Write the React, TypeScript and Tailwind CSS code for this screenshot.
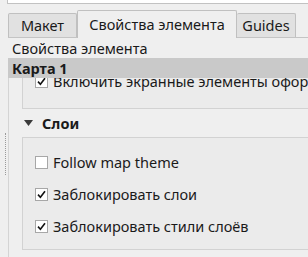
import * as React from 'react';

const Check = ({ checked }: { checked: boolean }) => (
	<div className="w-[13px] h-[13px] bg-white border border-[#a7a7a7] flex items-center justify-center shrink-0">
		{checked && (
			<svg width="9" height="9" viewBox="0 0 9 9">
				<path d="M1 4.6 L3.4 7.2 L8 1.2" fill="none" stroke="#111" strokeWidth="1.6" />
			</svg>
		)}
	</div>
);

const CheckRow = ({ label, checked }: { label: string; checked: boolean }) => (
	<div className="flex items-center h-[20px] pl-[12px] gap-[5px] whitespace-nowrap">
		<Check checked={checked} />
		<span>{label}</span>
	</div>
);

const App = () => {
	return (
		<div className="w-[308px] h-[257px] bg-[#efefef] overflow-hidden text-[14.5px] leading-none text-[#1a1a1a] font-['Noto_Sans','DejaVu_Sans',sans-serif]">
			<div className="ml-[7px] h-[4px] bg-white border border-t-0 border-r-0 border-[#c2c2c2]" />

			<div className="flex items-end h-[28px] mt-[6px] ml-[8px] border-b border-[#c4c4c4]">
				<div className="h-[24px] w-[69px] border border-b-0 border-[#c0c0c0] bg-[#e1e1e1] rounded-t-[2px] flex items-center justify-center">
					Макет
				</div>
				<div className="h-[28px] w-[160px] -mb-px border border-b-0 border-[#c0c0c0] bg-[#efefef] rounded-t-[2px] flex items-center justify-center">
					Свойства элемента
				</div>
				<div className="h-[24px] w-[59px] border border-b-0 border-l-0 border-[#c0c0c0] bg-[#e1e1e1] rounded-t-[2px] flex items-center justify-center">
					Guides
				</div>
			</div>

			<div className="h-[20px] pl-[12px] flex items-center">Свойства элемента</div>

			<div className="h-[20px] ml-[8px] bg-[#c9c9c9] pl-[4px] flex items-center font-bold">
				Карта 1
			</div>

			<div className="flex h-[179px]">
				<div className="w-[8px] shrink-0 flex justify-center pt-[55px] pl-[2px]">
					<div className="h-[42px] border-l border-dotted border-[#9a9a9a]" />
				</div>
				<div className="flex-1 border-l border-[#d4d4d4] overflow-hidden">
					<div className="ml-[13px] h-[31px] border-l border-b border-[#d2d2d2] bg-[#ebebeb] overflow-hidden">
						<div className="-mt-[7px]">
							<CheckRow label="Включить экранные элементы оформления" checked />
						</div>
					</div>

					<div className="h-[28px] flex items-center pl-[15px] gap-[9px] font-bold">
						<svg width="9" height="6" viewBox="0 0 9 6">
							<path d="M0 0 H9 L4.5 6 Z" fill="#3a3a3a" />
						</svg>
						<span>Слои</span>
					</div>

					<div className="ml-[13px] h-[113px] border-l border-t border-b border-[#d2d2d2] bg-[#ebebeb] flex flex-col pt-[14px] gap-[12px]">
						<CheckRow label="Follow map theme" checked={false} />
						<CheckRow label="Заблокировать слои" checked />
						<CheckRow label="Заблокировать стили слоёв" checked />
					</div>
				</div>
			</div>
		</div>
	);
};

export default App;
